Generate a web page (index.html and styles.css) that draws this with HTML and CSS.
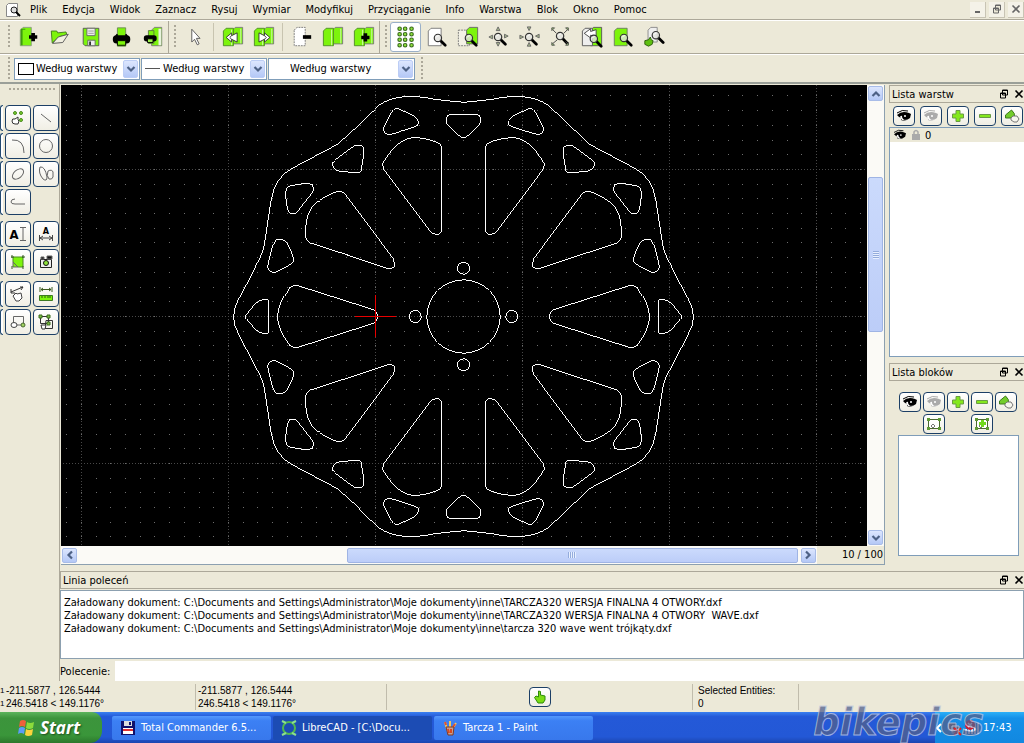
FILE: index.html
```
<!DOCTYPE html>
<html lang="pl">
<head>
    <meta charset="UTF-8">
    <meta name="viewport" content="width=device-width, initial-scale=1.0">
    <title>LibreCAD</title>
    <link rel="stylesheet" href="styles.css">
</head>
<body>
    <!-- Icon sprite -->
    <svg class="sprite" aria-hidden="true">
        <defs>
            <symbol id="lens" viewBox="0 0 24 24">
                <path d="M14 14l5 5" stroke="#000" stroke-width="3" stroke-linecap="round"/>
                <circle cx="11" cy="11" r="4" fill="#e4e4e0" fill-opacity=".8" stroke="#333" stroke-width="1.300"/>
                <path d="M9 10.500q1-2 3-2" stroke="#fff" fill="none"/>
            </symbol>
            <symbol id="i-new" viewBox="0 0 24 24">
                <path d="M2.500 4.500l3-3h9v20h-12z" fill="#7df40c" stroke="#8a9a80"/>
                <path d="M3 3h5v1H5v17H3z" fill="#3f9a10"/>
                <path d="M12 12h9M16.500 7.500v9" stroke="#000" stroke-width="4"/>
            </symbol>
            <symbol id="i-open" viewBox="0 0 24 24">
                <path d="M3.500 18.500l-1-13 6 0 1 2 9-1 1 3-8 2z" fill="#7df40c" stroke="#3f7a1c"/>
                <path d="M4 19l6-7 11-3-6 9z" fill="#f2f0e0" stroke="#555"/>
            </symbol>
            <symbol id="i-save" viewBox="0 0 24 24">
                <path d="M3.500 2.500h17v19h-15l-2-2z" fill="#7df40c" stroke="#555"/>
                <path d="M7.500 2.500h9v8h-9zM8.500 15.500h8v6h-8z" fill="#eee" stroke="#666"/>
                <path d="M9 5.500h6M9 8h6" stroke="#999"/>
                <path d="M10 17h2v4h-2z" fill="#333"/>
            </symbol>
            <symbol id="i-print" viewBox="0 0 24 24">
                <path d="M7 2h9v20H7z" fill="#7df40c" stroke="#6a8a50"/>
                <rect x="2" y="10" width="19" height="9" rx="4"/>
                <path d="M7 9l-2 3M16 9l2 3" stroke="#000" stroke-width="2"/>
                <path d="M7 16h9v5H7z" fill="#7df40c" stroke="#000"/>
            </symbol>
            <symbol id="i-preview" viewBox="0 0 24 24">
                <path d="M10.500 4.500l3-3h8v20h-11z" fill="#7df40c" stroke="#777"/>
                <path d="M18 3h3v18h-3z" fill="#e8f4dc"/>
                <path d="M7 5h6v14H7z" fill="#7df40c" stroke="#5a7a40"/>
                <rect x="2" y="10" width="14" height="7" rx="3"/>
                <path d="M6 14h6v4H6z" fill="#9df04c" stroke="#000"/>
            </symbol>
            <symbol id="i-pointer" viewBox="0 0 24 24">
                <path d="M8.500 3.500v14l3-3 3 6 2-1-3-6h4z" fill="#fff" stroke="#555"/>
            </symbol>
            <symbol id="sheets" viewBox="0 0 24 24">
                <path d="M11.500 4.500l3-3h8v18h-11z" fill="#7df40c" stroke="#777"/>
                <path d="M1.500 5.500l3-3h8v19h-11z" fill="#7df40c" stroke="#4f8a28"/>
                <path d="M20.500 3v16M10.500 4v17" stroke="#d8f8b8"/>
            </symbol>
            <symbol id="i-undo" viewBox="0 0 24 24">
                <use href="#sheets"/>
                <path d="M10.500 7.500l-6 5 6 5v-3l6 3v-10l-6 3z" fill="#fff" stroke="#333"/>
                <path d="M10.500 10.500l-2 2 2 2" fill="none" stroke="#333"/>
            </symbol>
            <symbol id="i-redo" viewBox="0 0 24 24">
                <use href="#sheets"/>
                <path d="M12.500 7.500l6 5-6 5v-3l-6 3v-10l6 3z" fill="#fff" stroke="#333"/>
                <path d="M12.500 10.500l2 2-2 2" fill="none" stroke="#333"/>
            </symbol>
            <symbol id="i-cut" viewBox="0 0 24 24">
                <path d="M3.500 4.500l3-3h9v20h-12z" fill="#fff" stroke="#777" stroke-dasharray="2 1"/>
                <path d="M13 12h9" stroke="#000" stroke-width="4"/>
            </symbol>
            <symbol id="i-copy" viewBox="0 0 24 24"><use href="#sheets"/></symbol>
            <symbol id="i-paste" viewBox="0 0 24 24">
                <use href="#sheets"/>
                <path d="M9 12.500h9M13.500 8v9" stroke="#000" stroke-width="4"/>
            </symbol>
            <symbol id="i-grid" viewBox="0 0 24 24">
                <path d="M5 3h.1M11 3h.1M18 3h.1M5 9h.1M11 9h.1M18 9h.1M5 15h.1M11 15h.1M18 15h.1M5 21h.1M11 21h.1M18 21h.1" stroke="#3c6b20" stroke-width="5" stroke-linecap="round"/>
                <path d="M5 3h.1M11 3h.1M18 3h.1M5 9h.1M11 9h.1M18 9h.1M5 15h.1M11 15h.1M18 15h.1M5 21h.1M11 21h.1M18 21h.1" stroke="#8fe23c" stroke-width="2.500" stroke-linecap="round"/>
            </symbol>
            <symbol id="i-redraw" viewBox="0 0 24 24">
                <path d="M2.500 5.500l3-3h11v19h-14z" fill="#fff" stroke="#777"/>
                <use href="#lens" x="2" y="2"/>
            </symbol>
            <symbol id="i-zoomwin" viewBox="0 0 24 24">
                <path d="M1.500 4.500h12v17h-12z" fill="#f3f1e6" stroke="#777" stroke-dasharray="2 1"/>
                <path d="M10.500 4.500l3-3h9v18h-12z" fill="#7df40c" stroke="#666"/>
                <use href="#lens" x="2" y="2"/>
            </symbol>
            <symbol id="i-zoomin" viewBox="0 0 24 24">
                <use href="#lens" x="0" y="1"/>
                <path d="M11 1l2 4H9zM11 22l2-4H9zM1 12l4-2v4zM22 11l-4-2v4z" fill="#a7b88c" stroke="#666"/>
            </symbol>
            <symbol id="i-zoomout" viewBox="0 0 24 24">
                <use href="#lens" x="0" y="1"/>
                <path d="M11 5l2-4H9zM11 18l2 4H9zM5 12l-4-2v4zM18 11l4-2v4z" fill="#a7b88c" stroke="#666"/>
            </symbol>
            <symbol id="i-zoomauto" viewBox="0 0 24 24">
                <use href="#lens" x="0" y="0"/>
                <path d="M2 3l5 5M2 20l6-5M20 3l-5 5M20 20l-3-3" stroke="#444"/>
                <path d="M2 2h3l-3 3zM20 2h-3l3 3zM2 21h3l-3-3zM20 21h-3l3-3z" fill="#9ccc70" stroke="#555"/>
            </symbol>
            <symbol id="i-zoomprev" viewBox="0 0 24 24">
                <path d="M10.500 4.500l3-3h9v20h-12z" fill="#7df40c" stroke="#555"/>
                <path d="M1.500 5.500l3-3h8v19h-11z" fill="#eee" stroke="#555"/>
                <path d="M3.500 8l7-5v3l6-2v8l-6-2v3z" fill="#fff" stroke="#444"/>
                <use href="#lens" x="3" y="3"/>
            </symbol>
            <symbol id="i-zoompage" viewBox="0 0 24 24">
                <path d="M2.500 5.500l3-3h11v19h-14z" fill="#7df40c" stroke="#6a7a60"/>
                <use href="#lens" x="2" y="2"/>
            </symbol>
            <symbol id="i-zoompan" viewBox="0 0 24 24">
                <path d="M5.500 4.500l3-3h7v16h-10z" fill="#eee" stroke="#888"/>
                <use href="#lens" x="3" y="-1"/>
                <path d="M2 16l4-1 2-3 1 3 2 1-1 4-4 2-4-2z" fill="#5fc010" stroke="#285a08"/>
            </symbol>
            <symbol id="i-doc" viewBox="0 0 16 16">
                <path d="M1.500 3.500l2-2h9v13h-11z" fill="#fff" stroke="#888"/>
                <circle cx="9" cy="8" r="3" fill="#ddd" stroke="#222"/>
                <path d="M11 10l4 4" stroke="#000" stroke-width="2"/>
            </symbol>

            <symbol id="i-select" viewBox="0 0 18 18">
                <g fill="#7ad02c" stroke="#4a8a20">
                    <circle cx="6" cy="4" r="1.500"/><circle cx="12" cy="4" r="1.500"/><circle cx="12" cy="11" r="1.500"/>
                </g>
                <path d="M3 12q0-3 3-2l3-2v3l1 1-1 3H6q-3 0-3-3z" fill="#fff" stroke="#333"/>
            </symbol>
            <symbol id="i-line" viewBox="0 0 18 18"><path d="M4 5l10 8"/></symbol>
            <symbol id="i-arc" viewBox="0 0 18 18"><path d="M3 3q12-1 12 13"/></symbol>
            <symbol id="i-circle" viewBox="0 0 18 18"><circle cx="9" cy="9" r="6.500"/></symbol>
            <symbol id="i-ellipse" viewBox="0 0 18 18"><ellipse cx="9" cy="9" rx="6.500" ry="4" transform="rotate(-40 9 9)"/></symbol>
            <symbol id="i-spline" viewBox="0 0 18 18">
                <path d="M3 2q5-1 7 10q0 5-4 2q-5-6-3-12zM11 6q4-2 5 1v5q-1 3-4 2q-3-3-1-8z"/>
            </symbol>
            <symbol id="i-poly" viewBox="0 0 18 18"><path d="M6 6q-4 0-4 3 0 2 4 2h10"/></symbol>
            <symbol id="i-caret" viewBox="0 0 8 14"><path d="M1 .5h6M4 .5v13M1 13.500h6" fill="none" stroke="#666"/></symbol>
            <symbol id="i-span" viewBox="0 0 14 6"><path d="M.5 0v6M13.500 0v6M1 3h12M4 1L1 3l3 2M10 1l3 2-3 2" fill="none" stroke="#444"/></symbol>
            <symbol id="i-hatch" viewBox="0 0 18 18">
                <path d="M4 4h10v10h-5l-5-5z" fill="#7df40c" stroke="#4a8a20"/>
                <path d="M4 9v5h5z" fill="#7df40c"/>
                <path d="M3 2v3M2 4h3M14 2v3M13 4h3M3 13v3M14 13v3" stroke="#345a20"/>
            </symbol>
            <symbol id="i-camera" viewBox="0 0 18 18">
                <path d="M3.500 6.500h11v8h-11z" fill="#eee" stroke="#222"/>
                <path d="M10 3h5v3h-5zM4 4h3v2H4z" fill="#111"/>
                <circle cx="9" cy="10" r="2.500" fill="#8fe23c" stroke="#111"/>
            </symbol>
            <symbol id="i-modify" viewBox="0 0 18 18">
                <path d="M2 7l12-5M11 2h3l-2 3M2 4v4h4" stroke="#333"/>
                <path d="M4 11l3-3 1 1 4-1 1 5-3 3H7z" fill="#fff" stroke="#444"/>
            </symbol>
            <symbol id="i-measure" viewBox="0 0 18 18">
                <path d="M3 2v5M15 2v5M4 4.500h10M6 3L4 4.500 6 6M12 3l2 1.500L12 6" stroke="#3c5a20"/>
                <path d="M2.500 10.500h13v5h-13z" fill="#7df40c" stroke="#3c7a20"/>
                <path d="M5 11v2M8 11v2M11 11v2M13 11v2" stroke="#285a10"/>
            </symbol>
            <symbol id="i-info" viewBox="0 0 18 18">
                <path d="M4.500 10v-6.500h10v8M7 12h6"/>
                <ellipse cx="5" cy="12" rx="3" ry="2.500" fill="#fff" stroke="#444"/>
                <circle cx="14" cy="12" r="2" fill="#9fd060" stroke="#4a6a30"/>
            </symbol>
            <symbol id="i-block" viewBox="0 0 18 18">
                <path d="M3.500 3.500h8v7h-8zM9 7.500h6.500v8H8z" stroke="#333"/>
                <path d="M2 2h3v3H2zM10 2h3v3h-3zM10 9h3v3h-3z" fill="#7ac040" stroke="#3c6a20"/>
                <path d="M4 12h5l-1 4H5z" fill="#fff" stroke="#333"/>
            </symbol>

            <symbol id="i-eye" viewBox="0 0 16 14">
                <path d="M1 6q5-5 12-2l2 1-1 4q-5 4-9 2 1-2-2-3z" fill="currentColor"/>
                <path d="M1 4q5-4 11-2" fill="none" stroke="currentColor"/>
                <path d="M4 8q1-2 2-1 0 3 3 4l3-1q-3 2-6 1z" fill="#fff"/>
                <circle cx="9" cy="7" r="1" fill="#fff"/>
            </symbol>
            <symbol id="i-plus" viewBox="0 0 14 14"><path d="M5 1.500h4V5h3.500v4H9v3.500H5V9H1.500V5H5z" fill="#84e81c" stroke="#6a9a44"/></symbol>
            <symbol id="i-minus" viewBox="0 0 14 14"><path d="M1.500 5.500h11v3h-11z" fill="#84e81c" stroke="#6a9a44"/></symbol>
            <symbol id="i-edit" viewBox="0 0 16 14">
                <path d="M1.500 9V6l6-5q4 3 3 8z" fill="#74cc2c" stroke="#3f7a1c"/>
                <path d="M7 9l2-2 4 0 2 3-2 3-3 0-3-2z" fill="#f6f6ee" stroke="#777"/>
            </symbol>
            <symbol id="i-frame" viewBox="0 0 16 14">
                <path d="M2.500 2.500h11v9h-11z" fill="#fff" stroke="#4a6a30"/>
                <path d="M1 1h3v3H1zM12 1h3v3h-3zM1 10h3v3H1zM12 10h3v3h-3z" fill="#5f9a34"/>
                <path d="M5 9l2-2 2 2-2 2z" fill="#fff" stroke="#777"/>
            </symbol>
            <symbol id="i-insert" viewBox="0 0 16 14">
                <use href="#i-frame"/>
                <path d="M5 6.500h7M8.500 3v7" stroke="#6fd81c" stroke-width="3"/>
            </symbol>
            <symbol id="i-lock" viewBox="0 0 10 12"><path d="M1 5h8v6H1z" fill="#aaa"/><path d="M3 5V3q2-3 4 0v2" fill="none" stroke="#aaa" stroke-width="1.500"/></symbol>
            <symbol id="i-float" viewBox="0 0 10 10"><path d="M3.500 1v5h5V1zM3 1.500h6M1.500 4v5h5V4zM1 4.500h6" fill="#ece9d8" stroke="currentColor"/></symbol>
            <symbol id="i-close" viewBox="0 0 10 10"><path d="M1.500 1.500l7 7M8.500 1.500l-7 7" stroke="currentColor" stroke-width="1.600"/></symbol>
            <symbol id="i-down" viewBox="0 0 10 10"><path d="M1.500 3L5 6.500 8.500 3" fill="none" stroke="#4d6185" stroke-width="2.200"/></symbol>
            <symbol id="i-hand" viewBox="0 0 14 14"><path d="M5.500 1v6L3 6 1.500 7.500 5 13h5l2-3V6L7.500 5V1.500z" fill="#7bdc14" stroke="#2c8a08"/></symbol>

            <!-- Upper left quarter of the brake disc, hub at 0,0 -->
            <g id="quarter">
                <path d="M0 -643Q-70 -648 -110 -656Q-215 -672 -265 -624L-360 -534Q-380 -511 -400 -505L-515 -444Q-565 -418 -577 -350L-597 -220Q-600 -190 -625 -150L-672 -58Q-689 -30 -690 0"/>
                <path d="M-66 -505V-260Q-67 -247 -81 -246Q-93 -247 -103 -260L-240 -443Q-247 -458 -236 -470Q-195 -535 -150 -537Q-105 -535 -74 -520Q-66 -515 -66 -505Z"/>
                <path d="M-357 -370L-211 -174Q-202 -160 -208 -148Q-215 -142 -230 -145L-459 -220Q-475 -227 -474 -248Q-475 -320 -438 -344Q-425 -355 -386 -373Q-370 -380 -357 -370Z"/>
                <path d="M-558 0Q-556 -42 -525 -81Q-518 -96 -495 -92L-272 -21Q-258 -16 -258 0"/>
                <path d="M-52 -588Q-53 -605 -38 -606H0M-52 -588Q-53 -578 -35 -562Q-12 -537 0 -537"/>
                <path d="M-215 -614Q-205 -630 -188 -620L-148 -602Q-128 -585 -138 -573Q-155 -565 -222 -546Q-243 -547 -239 -566Q-235 -580 -215 -614Z"/>
                <path d="M-328 -512Q-305 -520 -299 -504Q-299 -480 -308 -435Q-312 -429 -322 -431L-377 -437Q-394 -445 -393 -463Q-387 -470 -328 -512Z"/>
                <path d="M-520 -392Q-465 -404 -453 -395Q-446 -380 -455 -370L-498 -315Q-510 -302 -523 -311Q-531 -325 -534 -368Q-533 -388 -520 -392Z"/>
                <path d="M-565 -228Q-548 -241 -530 -220Q-510 -185 -509 -167Q-512 -156 -565 -133Q-584 -130 -588 -148Q-575 -215 -565 -228Z"/>
                <path d="M-654 0Q-652 -10 -622 -40Q-604 -55 -588 -50Q-584 -48 -584 -40V0"/>
            </g>

            <pattern id="minor" x="20" y="84" width="147" height="147" patternUnits="userSpaceOnUse">
                <path d="M0 .5H147M0 15.500H147M0 29.500H147M0 44.500H147M0 59.500H147M0 73.500H147M0 88.500H147M0 103.500H147M0 118.500H147M0 132.500H147"
                    stroke="#6e6e6e" stroke-dasharray="1 14 1 13 1 14 1 14 1 13 1 14 1 14 1 14 1 13 1 14"/>
            </pattern>
            <pattern id="major" x="20" y="84" width="147" height="147" patternUnits="userSpaceOnUse">
                <path d="M0 .5H147M.5 0V147" stroke="#484848" stroke-dasharray="1 2"/>
            </pattern>
        </defs>
    </svg>

    <nav class="menubar">
        <svg class="doc-icon"><use href="#i-doc"/></svg>
        <a href="#">Plik</a>
        <a href="#">Edycja</a>
        <a href="#">Widok</a>
        <a href="#">Zaznacz</a>
        <a href="#">Rysuj</a>
        <a href="#">Wymiar</a>
        <a href="#">Modyfikuj</a>
        <a href="#">Przyciąganie</a>
        <a href="#">Info</a>
        <a href="#">Warstwa</a>
        <a href="#">Blok</a>
        <a href="#">Okno</a>
        <a href="#">Pomoc</a>
        <div class="window-buttons">
            <button aria-label="Minimalizuj"><svg viewBox="0 0 10 10"><path d="M2 8h5" stroke="currentColor" stroke-width="2"/></svg></button>
            <button aria-label="Przywróć"><svg><use href="#i-float"/></svg></button>
            <button aria-label="Zamknij"><svg><use href="#i-close"/></svg></button>
        </div>
    </nav>

    <div class="toolbar">
        <div class="group">
            <span class="handle"></span>
            <button aria-label="Nowy"><svg><use href="#i-new"/></svg></button>
            <button aria-label="Otwórz"><svg><use href="#i-open"/></svg></button>
            <button aria-label="Zapisz"><svg><use href="#i-save"/></svg></button>
            <button aria-label="Drukuj"><svg><use href="#i-print"/></svg></button>
            <button aria-label="Podgląd wydruku"><svg><use href="#i-preview"/></svg></button>
        </div>
        <div class="group">
            <span class="handle"></span>
            <button aria-label="Wskaźnik"><svg><use href="#i-pointer"/></svg></button>
            <span class="separator"></span>
            <button aria-label="Cofnij"><svg><use href="#i-undo"/></svg></button>
            <button aria-label="Ponów"><svg><use href="#i-redo"/></svg></button>
            <span class="separator"></span>
            <button aria-label="Wytnij"><svg><use href="#i-cut"/></svg></button>
            <button aria-label="Kopiuj"><svg><use href="#i-copy"/></svg></button>
            <button aria-label="Wklej"><svg><use href="#i-paste"/></svg></button>
        </div>
        <div class="group last">
            <span class="handle"></span>
            <button class="checked" aria-label="Siatka"><svg><use href="#i-grid"/></svg></button>
            <button aria-label="Odśwież"><svg><use href="#i-redraw"/></svg></button>
            <button aria-label="Powiększ okno"><svg><use href="#i-zoomwin"/></svg></button>
            <button aria-label="Powiększ"><svg><use href="#i-zoomin"/></svg></button>
            <button aria-label="Pomniejsz"><svg><use href="#i-zoomout"/></svg></button>
            <button aria-label="Dopasuj"><svg><use href="#i-zoomauto"/></svg></button>
            <button aria-label="Poprzedni widok"><svg><use href="#i-zoomprev"/></svg></button>
            <button aria-label="Strona"><svg><use href="#i-zoompage"/></svg></button>
            <button aria-label="Przesuń"><svg><use href="#i-zoompan"/></svg></button>
        </div>
    </div>

    <div class="toolbar pens">
        <span class="handle"></span>
        <div class="combo">
            <span class="swatch"></span>
            <select aria-label="Kolor"><option>Według warstwy</option></select>
            <span class="arrow"><svg><use href="#i-down"/></svg></span>
        </div>
        <div class="combo">
            <span class="dash"></span>
            <select aria-label="Szerokość"><option>Według warstwy</option></select>
            <span class="arrow"><svg><use href="#i-down"/></svg></span>
        </div>
        <div class="combo wide">
            <select aria-label="Typ linii"><option>Według warstwy</option></select>
            <span class="arrow"><svg><use href="#i-down"/></svg></span>
        </div>
        <span class="handle end"></span>
    </div>

    <main>
        <aside class="tools">
            <span class="grip"></span>
            <div class="tool-grid">
                <i></i><button aria-label="Zaznacz"><svg><use href="#i-select"/></svg></button><button aria-label="Linia"><svg><use href="#i-line"/></svg></button>
                <i></i><button aria-label="Łuk"><svg><use href="#i-arc"/></svg></button><button aria-label="Okrąg"><svg><use href="#i-circle"/></svg></button>
                <i></i><button aria-label="Elipsa"><svg><use href="#i-ellipse"/></svg></button><button aria-label="Splajn"><svg><use href="#i-spline"/></svg></button>
                <i></i><button aria-label="Polilinia"><svg><use href="#i-poly"/></svg></button>
            </div>
            <div class="tool-grid">
                <i></i><button aria-label="Tekst"><b>A</b><svg class="caret"><use href="#i-caret"/></svg></button><button class="stacked" aria-label="Wymiar"><b>A</b><svg class="span"><use href="#i-span"/></svg></button>
                <i></i><button aria-label="Kreskowanie"><svg><use href="#i-hatch"/></svg></button><button aria-label="Obraz"><svg><use href="#i-camera"/></svg></button>
            </div>
            <div class="tool-grid">
                <i></i><button aria-label="Modyfikuj"><svg><use href="#i-modify"/></svg></button><button aria-label="Zmierz"><svg><use href="#i-measure"/></svg></button>
                <i></i><button aria-label="Informacje"><svg><use href="#i-info"/></svg></button><button aria-label="Blok"><svg><use href="#i-block"/></svg></button>
            </div>
        </aside>

        <section class="workspace">
            <div class="upper">
                <div class="view">
                    <svg class="drawing" viewBox="0 0 806 461" preserveAspectRatio="xMidYMid slice">
                        <rect width="806" height="461" fill="url(#minor)"/>
                        <rect width="806" height="461" fill="url(#major)"/>
                        <g class="part" transform="translate(402.500 231.500) scale(.3333)">
                            <use href="#quarter"/>
                            <use href="#quarter" transform="scale(-1 1)"/>
                            <use href="#quarter" transform="scale(1 -1)"/>
                            <use href="#quarter" transform="scale(-1 -1)"/>
                            <circle r="110"/>
                            <circle cx="-145" r="18"/>
                            <circle cx="145" r="18"/>
                            <circle cy="-145" r="18"/>
                            <circle cy="145" r="18"/>
                        </g>
                        <g class="cursor">
                            <rect x="294" y="231" width="41" height="1"/>
                            <rect x="314" y="210" width="1" height="42"/>
                        </g>
                    </svg>
                    <div class="scroll vertical">
                        <button aria-label="W górę"><svg class="up"><use href="#i-down"/></svg></button>
                        <span class="before"></span><span class="thumb"></span><span class="after"></span>
                        <button aria-label="W dół"><svg><use href="#i-down"/></svg></button>
                    </div>
                    <div class="scroll horizontal">
                        <button aria-label="W lewo"><svg class="left"><use href="#i-down"/></svg></button>
                        <span class="before"></span><span class="thumb"></span><span class="after"></span>
                        <button aria-label="W prawo"><svg class="right"><use href="#i-down"/></svg></button>
                        <span class="zoom-info">10 / 100</span>
                    </div>
                </div>

                <aside class="docks">
                    <header class="dock-title">
                        <span>Lista warstw</span>
                        <button aria-label="Odczep"><svg><use href="#i-float"/></svg></button>
                        <button aria-label="Zamknij"><svg><use href="#i-close"/></svg></button>
                    </header>
                    <div class="dock-buttons layers">
                        <button aria-label="Pokaż wszystkie"><svg><use href="#i-eye"/></svg></button>
                        <button class="off" aria-label="Ukryj wszystkie"><svg><use href="#i-eye"/></svg></button>
                        <button aria-label="Dodaj warstwę"><svg><use href="#i-plus"/></svg></button>
                        <button aria-label="Usuń warstwę"><svg><use href="#i-minus"/></svg></button>
                        <button aria-label="Edytuj warstwę"><svg><use href="#i-edit"/></svg></button>
                    </div>
                    <ul class="layer-list">
                        <li><svg class="eye"><use href="#i-eye"/></svg><svg class="lock"><use href="#i-lock"/></svg>0</li>
                    </ul>
                    <header class="dock-title">
                        <span>Lista bloków</span>
                        <button aria-label="Odczep"><svg><use href="#i-float"/></svg></button>
                        <button aria-label="Zamknij"><svg><use href="#i-close"/></svg></button>
                    </header>
                    <div class="dock-buttons blocks">
                        <button aria-label="Pokaż bloki"><svg><use href="#i-eye"/></svg></button>
                        <button class="off" aria-label="Ukryj bloki"><svg><use href="#i-eye"/></svg></button>
                        <button aria-label="Dodaj blok"><svg><use href="#i-plus"/></svg></button>
                        <button aria-label="Usuń blok"><svg><use href="#i-minus"/></svg></button>
                        <button aria-label="Zmień nazwę"><svg><use href="#i-edit"/></svg></button>
                        <button class="second" aria-label="Edytuj blok"><svg><use href="#i-frame"/></svg></button>
                        <button class="fourth" aria-label="Wstaw blok"><svg><use href="#i-insert"/></svg></button>
                    </div>
                    <div class="block-list"></div>
                </aside>
            </div>

            <section class="command">
                <header class="dock-title">
                    <span>Linia poleceń</span>
                    <button aria-label="Odczep"><svg><use href="#i-float"/></svg></button>
                    <button aria-label="Zamknij"><svg><use href="#i-close"/></svg></button>
                </header>
                <div class="history">
                    <p>Załadowany dokument: C:\Documents and Settings\Administrator\Moje dokumenty\inne\TARCZA320 WERSJA FINALNA 4 OTWORY.dxf</p>
                    <p>Załadowany dokument: C:\Documents and Settings\Administrator\Moje dokumenty\inne\TARCZA320 WERSJA FINALNA 4 OTWORY&nbsp; WAVE.dxf</p>
                    <p>Załadowany dokument: C:\Documents and Settings\Administrator\Moje dokumenty\inne\tarcza 320 wave went trójkąty.dxf</p>
                </div>
                <div class="prompt">
                    <label for="cmd">Polecenie:</label>
                    <input id="cmd" type="text">
                </div>
            </section>
        </section>
    </main>

    <footer class="status">
        <div class="coords marks"><sup>1</sup><sup>1</sup></div>
        <div class="coords absolute">-211.5877 , 126.5444<br>246.5418 &lt; 149.1176°</div>
        <div class="coords relative">-211.5877 , 126.5444<br>246.5418 &lt; 149.1176°</div>
        <div class="mouse"><button aria-label="Przesuwanie"><svg><use href="#i-hand"/></svg></button></div>
        <div class="coords selected">Selected Entities:<br>0</div>
        <div class="rest"></div>
    </footer>

    <div class="taskbar">
        <button class="start">
            <svg viewBox="0 0 20 20">
                <path d="M4 3q3-2 6 0L9 9Q6 7 3 9z" fill="#f0603c"/>
                <path d="M11 4q3 2 7 0l-1 6q-4 2-7 0z" fill="#8ddc3c"/>
                <path d="M3 10q3-2 6 0l-1 6q-3-2-6 0z" fill="#5c9cf8"/>
                <path d="M10 11q3 2 7 0l-1 6q-4 2-7 0z" fill="#fcd43c"/>
            </svg>
            Start
        </button>
        <button class="task">
            <svg viewBox="0 0 16 16">
                <path d="M1 1h14v14H1z" fill="#10106c"/>
                <path d="M4 1h8v5H4z" fill="#ddd"/><path d="M9 2h2v3H9z" fill="#10106c"/>
                <path d="M3 8h10v6H3z" fill="#fff"/><path d="M3 9h10v2H3z" fill="#e03030"/>
            </svg>
            Total Commander 6.5...
        </button>
        <button class="task active">
            <svg viewBox="0 0 16 16">
                <circle cx="8" cy="8" r="6" fill="none" stroke="#50b850" stroke-width="2"/>
                <path d="M1 1l4 2M15 1l-4 2M1 15l4-2M15 15l-4-2" stroke="#8ce08c" stroke-width="2"/>
            </svg>
            LibreCAD - [C:\Docu...
        </button>
        <button class="task">
            <svg viewBox="0 0 16 16">
                <path d="M5 9L3 2M8 9V1M10 9l4-6" stroke="#f0c860" stroke-width="2"/>
                <path d="M3 2l1 3M13 4l-2 3" stroke="#e05030" stroke-width="2"/>
                <path d="M4 7h8l-1 8H6z" fill="#c8a090" stroke="#803820"/>
                <path d="M6 9l1 4M9 9v4" stroke="#d84820" stroke-width="2"/>
            </svg>
            Tarcza 1 - Paint
        </button>
        <span class="watermark">bikepics</span>
        <div class="tray">
            <button class="expand" aria-label="Pokaż ukryte ikony"><svg viewBox="0 0 8 10"><path d="M6 1L2 5l4 4" fill="none" stroke="#fff" stroke-width="2"/></svg></button>
            <svg class="tray-icons" viewBox="0 0 34 16">
                <path d="M2 3h8v7H2zM6 6h7v7H6z" fill="#5c6484" stroke="#b0b8d0"/>
                <path d="M8 8l7 7M15 8l-7 7" stroke="#e02020" stroke-width="2"/>
                <path d="M20 14V9M23 14V7M26 14V5M29 14V3M32 14V3" stroke="#eef" stroke-width="2"/>
                <circle cx="24" cy="5" r="5" fill="#c82030"/>
                <path d="M22 3l4 4M26 3l-4 4" stroke="#fff" stroke-width="1.500"/>
            </svg>
            <time>17:43</time>
        </div>
    </div>
</body>
</html>
```
FILE: styles.css
```
* {
    box-sizing: border-box;
}
body {
    margin: 0;
    min-height: 100vh;
    display: flex;
    flex-direction: column;
    background: #ece9d8;
    color: #000;
    font-family: "DejaVu Sans Condensed", "DejaVu Sans", sans-serif;
    font-stretch: condensed;
    font-size: 11px;
    line-height: 13px;
    overflow: hidden;
}
button {
    display: flex;
    align-items: center;
    justify-content: center;
    padding: 0;
    border: 0;
    background: none;
    color: inherit;
    font: inherit;
    flex: none;
}
svg {
    display: block;
    flex: none;
}
p {
    margin: 0;
}
.sprite {
    position: absolute;
    width: 0;
    height: 0;
}

/* Menu */
.menubar {
    display: flex;
    align-items: center;
    gap: 15px;
    height: 20px;
    padding-left: 5px;
    border-bottom: 1px solid #aca899;
}
.menubar a {
    color: #000;
    text-decoration: none;
}
.doc-icon {
    width: 16px;
    height: 16px;
    margin-right: -6px;
}
.window-buttons {
    display: flex;
    gap: 3px;
    margin-left: auto;
}
.window-buttons button {
    width: 16px;
    height: 16px;
    background: #f4f2e8;
    border-right: 1px solid #c8c4b4;
    border-bottom: 1px solid #c8c4b4;
    color: #666;
}
.window-buttons svg {
    width: 10px;
    height: 10px;
}

/* Toolbars */
.toolbar {
    display: flex;
    align-items: center;
    height: 34px;
    border-top: 1px solid #fff;
    border-bottom: 1px solid #aca899;
}
.group {
    display: flex;
    align-items: center;
    align-self: stretch;
    padding-left: 5px;
    border-right: 1px solid #aca899;
}
.group:first-child {
    padding-left: 8px;
}
.group.last {
    border: 0;
}
.handle {
    width: 3px;
    height: 24px;
    margin-right: 2px;
    background: radial-gradient(circle at 1px 1px, #aca899 1px, transparent 1px) 0 0 / 3px 4px;
}
.separator {
    width: 1px;
    height: 28px;
    margin: 0 3px;
    background: #c8c4b0;
}
.toolbar button {
    width: 31px;
    height: 30px;
}
.toolbar button svg {
    width: 22px;
    height: 22px;
}
.toolbar .checked {
    background: #fff;
    border: 1px solid #9ab0c8;
    border-radius: 3px;
}
.toolbar.pens {
    height: 30px;
    gap: 1px;
    padding-left: 8px;
    border-bottom: 2px solid #9a9f98;
}
.combo {
    display: flex;
    align-items: center;
    width: 126px;
    height: 22px;
    padding: 0 1px 0 3px;
    background: #fff;
    border: 1px solid #7f9db9;
}
.combo.wide {
    width: 147px;
    padding-left: 21px;
}
.combo select {
    flex: 1;
    min-width: 0;
    padding: 0;
    border: 0;
    background: none;
    appearance: none;
    color: #000;
    font: inherit;
}
.swatch {
    width: 16px;
    height: 12px;
    margin-right: 2px;
    border: 1px solid #000;
}
.dash {
    width: 15px;
    height: 1px;
    margin-right: 3px;
    background: #555;
}
.arrow {
    display: flex;
    align-items: center;
    justify-content: center;
    width: 15px;
    height: 18px;
    background: linear-gradient(#dce6fe, #b4c8f6);
    border: 1px solid #bccdf5;
    border-radius: 2px;
}
.arrow svg {
    width: 10px;
    height: 10px;
}
.handle.end {
    margin-left: 5px;
}

/* Left tools */
main {
    display: flex;
    flex: 1;
    min-height: 0;
}
.tools {
    width: 60px;
    flex: none;
    padding-top: 4px;
    border-right: 1px solid #aca899;
}
.grip {
    display: block;
    height: 3px;
    margin: 0 4px 14px 9px;
    background: radial-gradient(circle at 1px 1px, #aca899 1px, transparent 1px) 0 0 / 4px 3px;
}
.tool-grid {
    display: grid;
    grid-template-columns: 3px 26px 26px;
    grid-auto-rows: 26px;
    gap: 2px;
    margin-bottom: 6px;
}
.tool-grid i {
    height: 26px;
    border: 1px solid #234a70;
    border-right: 0;
    border-radius: 4px 0 0 4px;
    background: #fff;
}
.tool-grid button,
.dock-buttons button,
.mouse button {
    background: linear-gradient(#fff, #f0eee4);
    border: 1px solid #1c3f66;
    border-radius: 4px;
}
.tool-grid svg {
    width: 18px;
    height: 18px;
    fill: none;
    stroke: #666;
}
.tool-grid b {
    font-size: 13px;
}
.tool-grid .caret {
    width: 8px;
    height: 14px;
}
.tool-grid .stacked {
    flex-direction: column;
}
.tool-grid .stacked b {
    font-size: 9px;
    line-height: 8px;
}
.tool-grid .span {
    width: 14px;
    height: 6px;
}

/* Drawing view */
.workspace {
    flex: 1;
    min-width: 0;
    display: flex;
    flex-direction: column;
}
.upper {
    flex: 1;
    display: flex;
    min-height: 0;
}
.view {
    flex: 1;
    min-width: 0;
    display: grid;
    grid-template-columns: 1fr 17px;
    grid-template-rows: 1fr 18px;
    margin: 1px 4px 6px 1px;
    border-right: 1px solid #8ca0b0;
    border-bottom: 1px solid #8ca0b0;
}
.drawing {
    width: 100%;
    height: 100%;
    min-height: 0;
    background: #000;
}
.drawing .part {
    fill: none;
    stroke: #fff;
    stroke-width: 3;
    shape-rendering: crispEdges;
}
.drawing .cursor {
    fill: #e80000;
    shape-rendering: crispEdges;
}
.scroll {
    display: flex;
    background: #fbfaf6;
}
.scroll button {
    width: 15px;
    height: 15px;
    margin: 1px;
    background: linear-gradient(#dce6fe, #b4c8f6);
    border: 1px solid #a8bce8;
    border-radius: 2px;
}
.scroll button svg {
    width: 10px;
    height: 10px;
}
.up {
    transform: rotate(180deg);
}
.left {
    transform: rotate(90deg);
}
.right {
    transform: rotate(-90deg);
}
.scroll.vertical {
    flex-direction: column;
}
.scroll.horizontal {
    grid-column: 1 / 3;
    align-items: center;
}
.thumb {
    display: flex;
    align-items: center;
    justify-content: center;
    background: linear-gradient(#cbdafc, #bccdf8);
    border: 1px solid #9fb4e4;
    border-radius: 2px;
}
.thumb::before {
    content: "";
    width: 8px;
    height: 6px;
    background: repeating-linear-gradient(90deg, #94acdc 0 1px, #e8f0ff 1px 2px);
}
.vertical .thumb {
    flex: 155;
    margin: 0 1px;
}
.vertical .thumb::before {
    width: 6px;
    height: 8px;
    background: repeating-linear-gradient(#94acdc 0 1px, #e8f0ff 1px 2px);
}
.vertical .before {
    flex: 76;
}
.vertical .after {
    flex: 199;
}
.horizontal .before {
    flex: 270;
}
.horizontal .thumb {
    flex: 451;
    height: 15px;
}
.horizontal .after {
    flex: 2;
}
.zoom-info {
    width: 67px;
    align-self: stretch;
    padding: 2px 1px 0 0;
    background: #ece9d8;
    text-align: right;
}

/* Right docks */
.docks {
    width: 135px;
    flex: none;
    display: flex;
    flex-direction: column;
    padding-top: 1px;
}
.dock-title {
    display: flex;
    align-items: center;
    gap: 5px;
    height: 18px;
    padding-left: 2px;
    border: 1px solid #aca899;
    border-right: 0;
}
.dock-title span {
    flex: 1;
}
.dock-title svg {
    width: 10px;
    height: 10px;
}
.dock-buttons {
    display: grid;
}
.dock-buttons button {
    width: 22px;
    height: 20px;
}
.dock-buttons svg {
    width: 16px;
    height: 14px;
}
.dock-buttons .off {
    color: #aaa;
}
.layers {
    grid-template-columns: repeat(5, 22px);
    gap: 5px;
    padding: 3px 0 1px 4px;
}
.layer-list {
    flex: 1;
    margin: 0 0 6px;
    padding: 0;
    background: #fff;
    border: 1px solid #7f9db9;
    border-right: 0;
    list-style: none;
}
.layer-list li {
    display: flex;
    align-items: center;
    gap: 4px;
    height: 14px;
    padding-left: 3px;
    background: #ece9d8;
}
.eye {
    width: 14px;
    height: 12px;
}
.lock {
    width: 10px;
    height: 12px;
}
.blocks {
    grid-template-columns: repeat(5, 22px);
    gap: 2px;
    padding: 11px 0 1px 10px;
}
.second {
    grid-column: 2;
}
.fourth {
    grid-column: 4;
}
.block-list {
    height: 121px;
    margin: 0 5px 15px 9px;
    background: #fff;
    border: 1px solid #7f9db9;
}

/* Command line */
.history {
    height: 69px;
    margin-top: 1px;
    padding: 5px 3px;
    background: #fff;
    border: 1px solid #8ca0b0;
    white-space: nowrap;
    overflow: hidden;
}
.prompt {
    display: flex;
    align-items: center;
    margin-top: 2px;
    height: 20px;
}
.prompt label {
    width: 55px;
}
.prompt input {
    flex: 1;
    align-self: stretch;
    border: 0;
    background: #fff;
    font: inherit;
}

/* Status bar */
.status {
    display: flex;
    align-items: center;
    height: 31px;
    font-family: "Liberation Sans", Arial, sans-serif;
    font-size: 10px;
}
.coords {
    flex: none;
    padding-left: 2px;
    border-left: 1px solid #c0bcac;
}
.marks {
    display: flex;
    flex-direction: column;
    width: 6px;
    padding: 0;
    border: 0;
}
.marks sup {
    font-size: 8px;
    line-height: 13px;
}
.absolute {
    width: 189px;
    padding: 0;
    border: 0;
}
.relative {
    width: 191px;
}
.mouse {
    flex: 1;
    display: flex;
    justify-content: center;
    align-items: center;
    height: 26px;
    border-left: 1px solid #c0bcac;
}
.mouse button {
    width: 22px;
    height: 20px;
}
.mouse svg {
    width: 14px;
    height: 14px;
}
.selected {
    width: 106px;
    padding-left: 5px;
}
.rest {
    width: 226px;
    height: 26px;
    border-left: 1px solid #c0bcac;
}

/* Taskbar */
.taskbar {
    position: relative;
    display: flex;
    align-items: center;
    gap: 2px;
    height: 31px;
    background: linear-gradient(#3a80f0, #2459d8 15%, #2358d6 80%, #1c46b0);
    color: #fff;
}
.start {
    width: 102px;
    align-self: stretch;
    gap: 4px;
    padding-right: 6px;
    margin-right: 8px;
    background: linear-gradient(#5cb45c, #3c943c 20%, #3a963a 75%, #2c782c);
    border-radius: 0 10px 12px 0;
    font-family: "Open Sans", sans-serif;
    font-stretch: normal;
    font-size: 17px;
    font-style: italic;
    font-weight: 700;
    text-shadow: 1px 1px 2px #1c4c1c;
}
.start svg {
    width: 20px;
    height: 20px;
}
.task {
    width: 159px;
    height: 24px;
    justify-content: flex-start;
    gap: 5px;
    padding-left: 8px;
    background: linear-gradient(#5498fc, #3c80f4 20%, #3878ec);
    border-radius: 2px;
}
.task.active {
    background: #1c4cb4;
}
.task svg {
    width: 16px;
    height: 16px;
}
.tray {
    display: flex;
    align-items: center;
    align-self: stretch;
    gap: 3px;
    width: 89px;
    margin-left: auto;
    background: linear-gradient(#2cb0f8, #1490e8 20%, #1288e0);
}
.expand,
.expand svg {
    width: 8px;
    height: 10px;
}
.tray-icons {
    width: 34px;
    height: 16px;
}
.watermark {
    position: absolute;
    right: 40px;
    bottom: 0;
    color: #52608c;
    opacity: 0.75;
    font-family: "DejaVu Sans", sans-serif;
    font-stretch: normal;
    font-size: 37px;
    font-style: italic;
    font-weight: 700;
    line-height: 40px;
    -webkit-text-stroke: 1px #c4cce0;
    pointer-events: none;
}
```
